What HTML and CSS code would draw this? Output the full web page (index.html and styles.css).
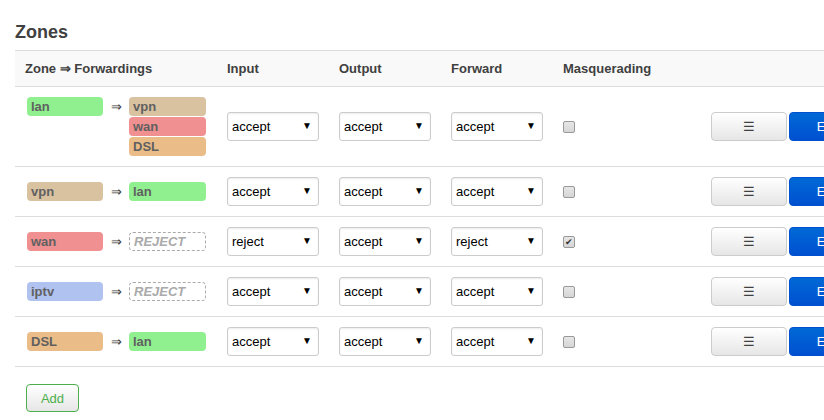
FILE: index.html
```html
<!DOCTYPE html>
<html lang="en">
<head>
    <meta charset="UTF-8">
    <title>Firewall - Zones</title>
    <link rel="stylesheet" href="styles.css">
</head>
<body>
    <div class="page">
        <h3 class="section-title">Zones</h3>
        <table class="zone-table">
            <colgroup>
                <col class="col-zone">
                <col class="col-policy">
                <col class="col-policy">
                <col class="col-policy">
                <col class="col-masq">
                <col class="col-actions">
            </colgroup>
            <thead>
                <tr>
                    <th>Zone &rArr; Forwardings</th>
                    <th>Input</th>
                    <th>Output</th>
                    <th>Forward</th>
                    <th>Masquerading</th>
                    <th></th>
                </tr>
            </thead>
            <tbody>
                <tr>
                    <td>
                        <div class="zone-fwd">
                            <span class="badge zone-lan">lan</span>
                            <span class="arrow">&rArr;</span>
                            <div class="dest-list">
                                <span class="badge zone-vpn">vpn</span>
                                <span class="badge zone-wan">wan</span>
                                <span class="badge zone-dsl">DSL</span>
                            </div>
                        </div>
                    </td>
                    <td><div class="select"><select><option>accept</option></select></div></td>
                    <td><div class="select"><select><option>accept</option></select></div></td>
                    <td><div class="select"><select><option>accept</option></select></div></td>
                    <td><span class="check"></span></td>
                    <td class="actions"><button class="btn">&#9776;</button><button class="btn btn-primary">Edit</button></td>
                </tr>
                <tr>
                    <td>
                        <div class="zone-fwd">
                            <span class="badge zone-vpn">vpn</span>
                            <span class="arrow">&rArr;</span>
                            <div class="dest-list">
                                <span class="badge zone-lan">lan</span>
                            </div>
                        </div>
                    </td>
                    <td><div class="select"><select><option>accept</option></select></div></td>
                    <td><div class="select"><select><option>accept</option></select></div></td>
                    <td><div class="select"><select><option>accept</option></select></div></td>
                    <td><span class="check"></span></td>
                    <td class="actions"><button class="btn">&#9776;</button><button class="btn btn-primary">Edit</button></td>
                </tr>
                <tr>
                    <td>
                        <div class="zone-fwd">
                            <span class="badge zone-wan">wan</span>
                            <span class="arrow">&rArr;</span>
                            <div class="dest-list">
                                <span class="badge reject">REJECT</span>
                            </div>
                        </div>
                    </td>
                    <td><div class="select"><select><option>reject</option></select></div></td>
                    <td><div class="select"><select><option>accept</option></select></div></td>
                    <td><div class="select"><select><option>reject</option></select></div></td>
                    <td><span class="check checked">&#10004;</span></td>
                    <td class="actions"><button class="btn">&#9776;</button><button class="btn btn-primary">Edit</button></td>
                </tr>
                <tr>
                    <td>
                        <div class="zone-fwd">
                            <span class="badge zone-iptv">iptv</span>
                            <span class="arrow">&rArr;</span>
                            <div class="dest-list">
                                <span class="badge reject">REJECT</span>
                            </div>
                        </div>
                    </td>
                    <td><div class="select"><select><option>accept</option></select></div></td>
                    <td><div class="select"><select><option>accept</option></select></div></td>
                    <td><div class="select"><select><option>accept</option></select></div></td>
                    <td><span class="check"></span></td>
                    <td class="actions"><button class="btn">&#9776;</button><button class="btn btn-primary">Edit</button></td>
                </tr>
                <tr>
                    <td>
                        <div class="zone-fwd">
                            <span class="badge zone-dsl">DSL</span>
                            <span class="arrow">&rArr;</span>
                            <div class="dest-list">
                                <span class="badge zone-lan">lan</span>
                            </div>
                        </div>
                    </td>
                    <td><div class="select"><select><option>accept</option></select></div></td>
                    <td><div class="select"><select><option>accept</option></select></div></td>
                    <td><div class="select"><select><option>accept</option></select></div></td>
                    <td><span class="check"></span></td>
                    <td class="actions"><button class="btn">&#9776;</button><button class="btn btn-primary">Edit</button></td>
                </tr>
            </tbody>
        </table>
        <div class="table-footer">
            <button class="btn btn-add">Add</button>
        </div>
    </div>
</body>
</html>
```

FILE: styles.css
```css
html, body {
    margin: 0;
    overflow: hidden;
}

body {
    font-family: "Liberation Sans", Arial, sans-serif;
    font-size: 13px;
    color: #404040;
    background-color: #fff;
}

.page {
    padding: 0 0 0 15px;
    width: 1000px;
}

.section-title {
    font-size: 18px;
    font-weight: bold;
    margin: 0;
    padding: 22px 0 8px 0;
    line-height: 20px;
    color: #404040;
}

.zone-table {
    border-collapse: collapse;
    table-layout: fixed;
    width: 960px;
}

.col-zone { width: 202px; }
.col-policy { width: 112px; }
.col-masq { width: 148px; }
.col-actions { width: 274px; }

.zone-table th {
    background-color: #f9f9f9;
    border-top: 1px solid #ddd;
    border-bottom: 1px solid #ddd;
    text-align: left;
    font-weight: bold;
    padding: 10px 10px 10px 10px;
    height: 15px;
    line-height: 15px;
    color: #404040;
}

.zone-table td {
    border-bottom: 1px solid #ddd;
    padding: 10px 10px;
    vertical-align: middle;
}

.zone-fwd {
    display: flex;
    align-items: flex-start;
    margin-left: 2px;
}

.arrow {
    width: 26px;
    text-align: center;
    line-height: 19px;
    color: #404040;
}

.dest-list {
    display: flex;
    flex-direction: column;
    gap: 1px;
}

.badge {
    display: block;
    box-sizing: border-box;
    width: 76px;
    height: 19px;
    line-height: 19px;
    padding: 0 4px;
    border-radius: 4px;
    color: #606060;
    font-size: 13px;
    font-weight: bold;
    white-space: nowrap;
}

.dest-list .badge {
    width: 77px;
}

.zone-lan { background-color: #90f090; }
.zone-wan { background-color: #f09090; }
.zone-vpn { background-color: #d8c2a0; }
.zone-dsl { background-color: #eabd88; }
.zone-iptv { background-color: #b0c2f0; }

.badge.reject {
    border: 1px dashed #aaa;
    color: #aaa;
    font-style: italic;
    line-height: 17px;
}

.select {
    position: relative;
    width: 92px;
}

.select select {
    appearance: none;
    -webkit-appearance: none;
    display: block;
    width: 92px;
    height: 29px;
    border: 1px solid #ccc;
    border-radius: 3px;
    background-color: #fff;
    box-shadow: inset 0 1px 2px rgba(0, 0, 0, 0.08);
    font-family: "Liberation Sans", Arial, sans-serif;
    font-size: 13px;
    color: #000;
    padding: 0 4px;
    margin: 0;
}

.select::after {
    content: "\25BC";
    position: absolute;
    right: 7px;
    top: 9px;
    font-size: 10px;
    line-height: 10px;
    color: #000;
    pointer-events: none;
}

.check {
    display: block;
    box-sizing: border-box;
    width: 12px;
    height: 12px;
    border: 1px solid #999;
    border-radius: 2px;
    background: linear-gradient(#e6e6e6, #d6d6d6);
    margin-left: 0;
    font-size: 9px;
    line-height: 10px;
    text-align: center;
    color: #333;
}

.actions {
    white-space: nowrap;
    font-size: 0;
}

.btn {
    box-sizing: border-box;
    width: 76px;
    height: 29px;
    border: 1px solid #ccc;
    border-radius: 4px;
    background: linear-gradient(#fff, #e6e6e6);
    font-family: "Liberation Sans", Arial, sans-serif;
    font-size: 13px;
    color: #404040;
    vertical-align: middle;
    padding: 0;
}

.actions .btn-primary {
    margin-left: 2px;
    width: 78px;
    border-color: #0050d0;
    background: linear-gradient(#0069d6, #0050d0);
    color: #fff;
}

.table-footer {
    padding: 17px 0 0 11px;
}

.btn-add {
    width: 53px;
    height: 28px;
    border-color: #4cae4c;
    color: #4cae4c;
}
```
